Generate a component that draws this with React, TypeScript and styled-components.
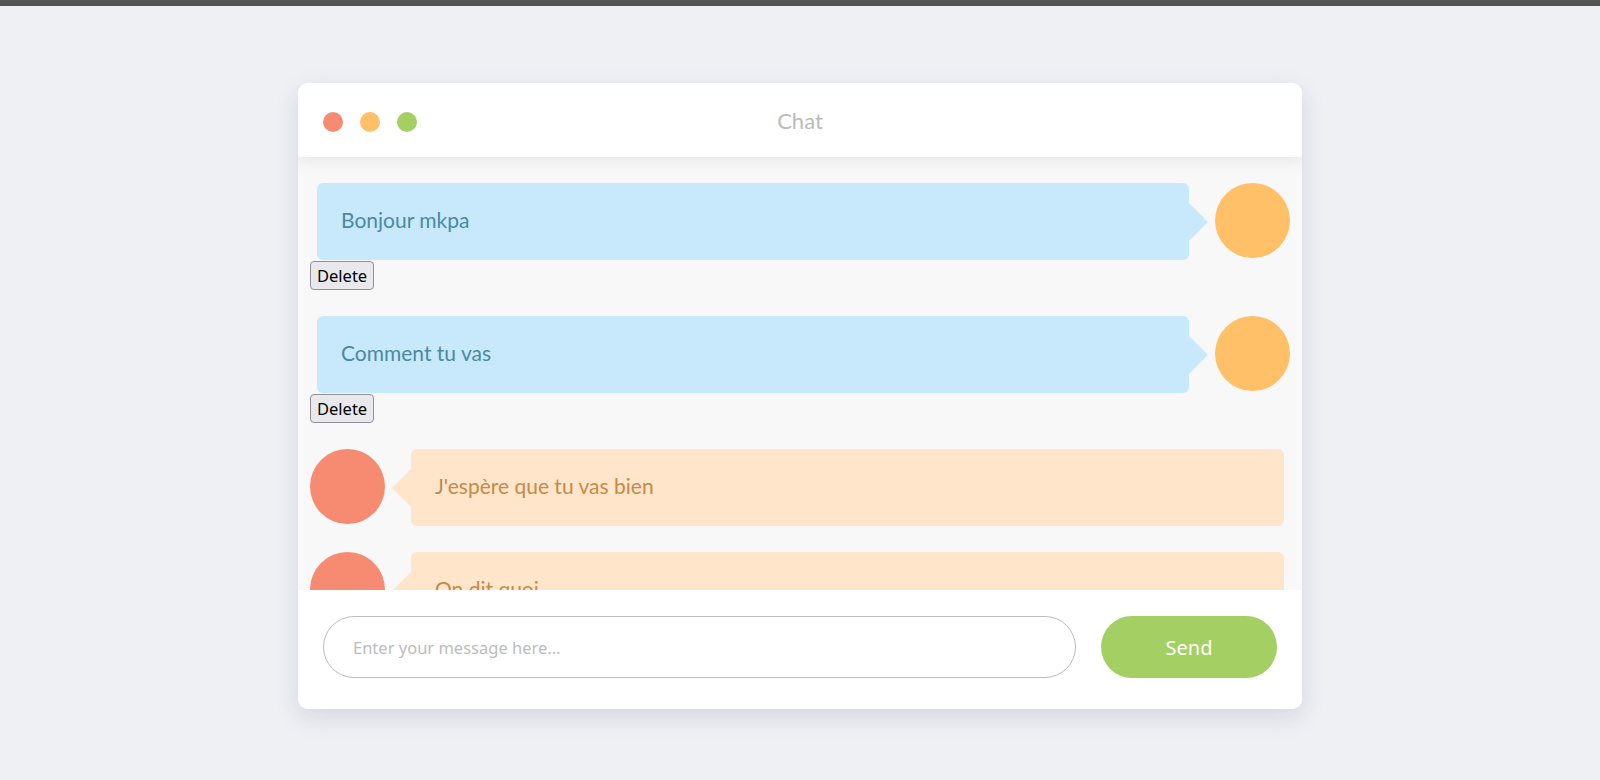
import styled, { createGlobalStyle } from "styled-components";

const GlobalStyle = createGlobalStyle`
  html, body {
    margin: 0;
    padding: 0;
    background: #eef0f4;
    font-family: 'Lato', 'Liberation Sans', sans-serif;
  }
`;

const TopBar = styled.div`
  height: 6px;
  background: #555555;
`;

const Page = styled.div`
  padding-top: 77px;
  padding-bottom: 60px;
`;

const Window = styled.div`
  width: 1004px;
  margin: 0 auto;
  background: #ffffff;
  border-radius: 10px;
  overflow: hidden;
  box-shadow: 0 8px 24px rgba(40, 50, 70, 0.13);
`;

const Header = styled.div`
  position: relative;
  z-index: 1;
  height: 74px;
  display: grid;
  grid-template-columns: 1fr auto 1fr;
  align-items: center;
  padding: 0 25px;
  background: #ffffff;
  box-shadow: 0 4px 14px rgba(0, 0, 0, 0.07);
`;

const Dots = styled.div`
  display: flex;
  gap: 17px;
  padding-top: 4px;
`;

const Dot = styled.span<{ color: string }>`
  width: 20px;
  height: 20px;
  border-radius: 50%;
  background: ${({ color }) => color};
`;

const Title = styled.div`
  font-size: 22px;
  color: #bbbbbb;
`;

const Messages = styled.div`
  height: 433px;
  box-sizing: border-box;
  background: #f8f8f8;
  overflow: hidden;
  padding: 26px 12px 0;
`;

const Entry = styled.div`
  margin-bottom: 26px;
`;

const Row = styled.div<{ side: "left" | "right" }>`
  display: flex;
  align-items: flex-start;
  gap: 26px;
  flex-direction: ${({ side }) => (side === "right" ? "row" : "row-reverse")};
  padding: ${({ side }) => (side === "right" ? "0 0 0 7px" : "0 6px 0 0")};
`;

const Bubble = styled.div<{ side: "left" | "right" }>`
  position: relative;
  flex: 1;
  padding: 24px 24px 28px;
  line-height: 25px;
  font-size: 21px;
  border-radius: 6px;
  background: ${({ side }) => (side === "right" ? "#c8e9fb" : "#ffe5ca")};
  color: ${({ side }) => (side === "right" ? "#4a8aa3" : "#c68a48")};

  &::after {
    content: "";
    position: absolute;
    top: 50%;
    margin-top: -19px;
    border-top: 19px solid transparent;
    border-bottom: 19px solid transparent;
    ${({ side }) =>
      side === "right"
        ? "right: -19px; border-left: 19px solid #c8e9fb;"
        : "left: -19px; border-right: 19px solid #ffe5ca;"}
  }
`;

const Avatar = styled.div<{ color: string }>`
  flex: none;
  width: 75px;
  height: 75px;
  border-radius: 50%;
  background: ${({ color }) => color};
`;

const DeleteButton = styled.button`
  display: block;
  margin-top: 1px;
  font-family: 'Noto Sans', 'DejaVu Sans', sans-serif;
  font-size: 16.5px;
  line-height: 21px;
  padding: 3px 6px;
  color: #000;
  background: #e9e9ed;
  border: 1px solid #8f8f9d;
  border-radius: 4px;
`;

const Footer = styled.form`
  display: flex;
  gap: 25px;
  padding: 26px 25px 31px;
  background: #ffffff;
`;

const Input = styled.input`
  flex: 1;
  height: 62px;
  box-sizing: border-box;
  border: 1px solid #bcbcbc;
  border-radius: 31px;
  padding: 0 29px;
  font-family: 'Noto Sans', 'DejaVu Sans', sans-serif;
  font-size: 16.5px;
  outline: none;

  &::placeholder {
    color: #bcbcbc;
  }
`;

const SendButton = styled.button`
  width: 176px;
  height: 62px;
  border: none;
  border-radius: 31px;
  background: #a3cf63;
  color: #ffffff;
  font-family: 'Noto Sans', 'DejaVu Sans', sans-serif;
  font-size: 20px;
`;

type Message = { id: number; text: string; side: "left" | "right" };

const messages: Message[] = [
  { id: 1, text: "Bonjour mkpa", side: "right" },
  { id: 2, text: "Comment tu vas", side: "right" },
  { id: 3, text: "J'espère que tu vas bien", side: "left" },
  { id: 4, text: "On dit quoi", side: "left" },
];

export default function App() {
  return (
    <>
      <GlobalStyle />
      <TopBar />
      <Page>
        <Window>
          <Header>
            <Dots>
              <Dot color="#f78b72" />
              <Dot color="#ffc068" />
              <Dot color="#a3cf63" />
            </Dots>
            <Title>Chat</Title>
            <div />
          </Header>

          <Messages>
            {messages.map((m) => (
              <Entry key={m.id}>
                <Row side={m.side}>
                  <Bubble side={m.side}>{m.text}</Bubble>
                  <Avatar color={m.side === "right" ? "#ffc068" : "#f78b72"} />
                </Row>
                {m.side === "right" && <DeleteButton type="button">Delete</DeleteButton>}
              </Entry>
            ))}
          </Messages>

          <Footer onSubmit={(e) => e.preventDefault()}>
            <Input placeholder="Enter your message here..." />
            <SendButton type="submit">Send</SendButton>
          </Footer>
        </Window>
      </Page>
    </>
  );
}
